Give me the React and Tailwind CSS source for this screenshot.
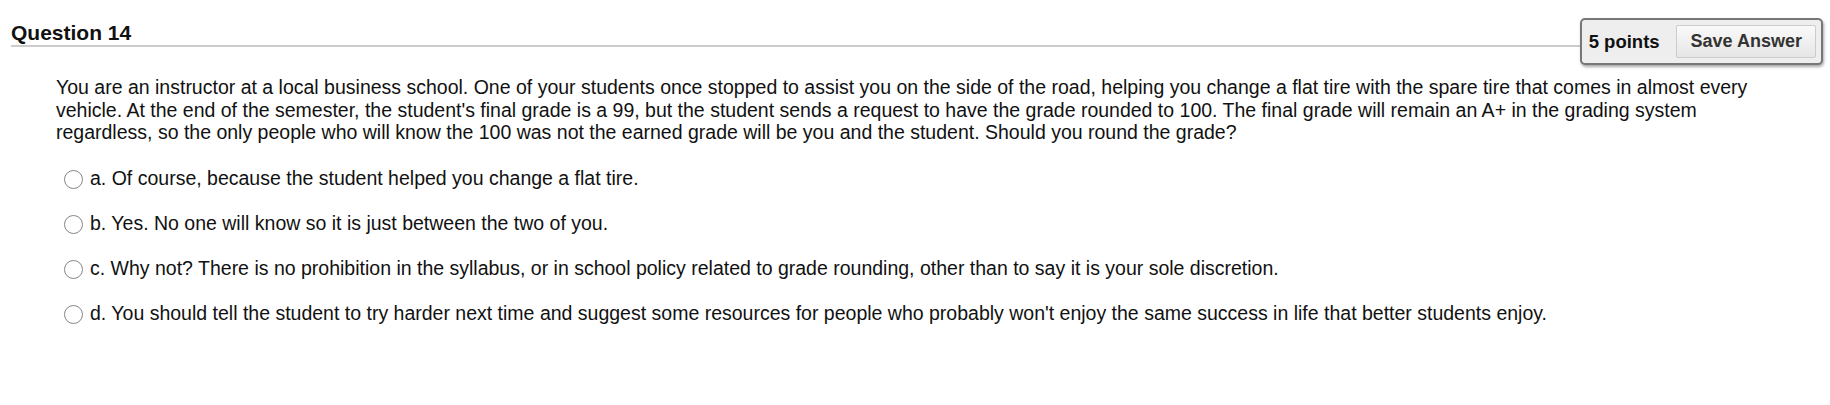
import React, { useState } from "react";

const options = [
  { key: "a", text: "Of course, because the student helped you change a flat tire." },
  { key: "b", text: "Yes. No one will know so it is just between the two of you." },
  {
    key: "c",
    text: "Why not? There is no prohibition in the syllabus, or in school policy related to grade rounding, other than to say it is your sole discretion.",
  },
  {
    key: "d",
    text: "You should tell the student to try harder next time and suggest some resources for people who probably won't enjoy the same success in life that better students enjoy.",
  },
];

const App = () => {
  const [picked, setPicked] = useState(null);

  return (
    <div className="w-[1830px] h-[405px] bg-white text-black font-['Liberation_Sans',Arial,sans-serif]">
      {/* Header */}
      <div className="relative pt-[22px] pl-[11px] pr-[10px]">
        <h3 className="text-[21px] leading-[22px] font-bold text-[#111] pb-[1px] border-b-2 border-[#cccccc]">
          Question 14
        </h3>
        <div className="absolute right-[7px] top-[18px] flex items-center gap-[16px] h-[47px] pl-[7px] pr-[5px] bg-[#eeeeee] border-2 border-[#777777] rounded-[5px] shadow-[1px_2px_3px_rgba(0,0,0,0.35)]">
          <span className="text-[18.5px] font-bold text-[#111]">5 points</span>
          <button className="h-[33px] pl-[14px] pr-[13px] text-[18px] font-bold text-[#333] border border-[#cccccc] rounded-[2px] bg-gradient-to-b from-[#fafafa] to-[#e6e6e6]">
            Save Answer
          </button>
        </div>
      </div>

      {/* Question body */}
      <div className="pl-[56px] pr-[75px] pt-[29px]">
        <p className="text-[19.5px] leading-[22.7px] text-[#111]">
          You are an instructor at a local business school. One of your students once stopped to assist you on the side
          of the road, helping you change a flat tire with the spare tire that comes in almost every vehicle. At the end
          of the semester, the student's final grade is a 99, but the student sends a request to have the grade rounded
          to 100. The final grade will remain an A+ in the grading system regardless, so the only people who will know
          the 100 was not the earned grade will be you and the student. Should you round the grade?
        </p>
      </div>

      <div className="pl-[64px] pt-[23px] flex flex-col gap-[22px]">
        {options.map((o) => (
          <label key={o.key} className="flex items-center gap-[7px] h-[23px] text-[19.5px] text-[#111] cursor-pointer">
            <span
              onClick={() => setPicked(o.key)}
              className="w-[19px] h-[19px] mt-[2px] rounded-full border border-[#858585] bg-white flex items-center justify-center"
            >
              {picked === o.key && <span className="w-[9px] h-[9px] rounded-full bg-[#333]" />}
            </span>
            <span>
              {o.key}. {o.text}
            </span>
          </label>
        ))}
      </div>
    </div>
  );
};

export default App;
